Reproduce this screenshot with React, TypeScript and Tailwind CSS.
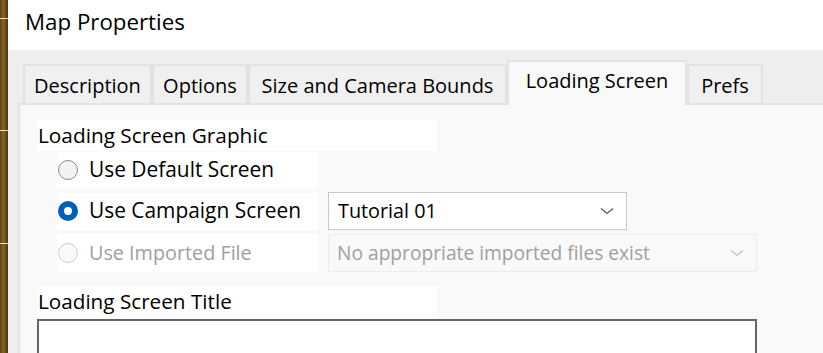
const font = "font-['Segoe_UI','Open_Sans','Noto_Sans',sans-serif]"

function Radio({ state }: { state: 'off' | 'on' | 'disabled' }) {
  if (state === 'on') {
    return (
      <span className="flex h-[20px] w-[20px] shrink-0 items-center justify-center rounded-full bg-[#005fb8]">
        <span className="h-[8px] w-[8px] rounded-full bg-white" />
      </span>
    )
  }
  return (
    <span
      className={
        state === 'off'
          ? 'h-[20px] w-[20px] shrink-0 rounded-full border border-[#8a8a8a] bg-[#f3f3f3]'
          : 'h-[20px] w-[20px] shrink-0 rounded-full border border-[#cfcfcf] bg-[#f9f9f9]'
      }
    />
  )
}

function Chevron({ color }: { color: string }) {
  return (
    <svg width="14" height="8" viewBox="0 0 14 8" fill="none">
      <path d="M1 1.5 L7 6.5 L13 1.5" stroke={color} strokeWidth="1.2" />
    </svg>
  )
}

const tabs = [
  { label: 'Description', w: 'w-[129px]' },
  { label: 'Options', w: 'w-[96px]' },
  { label: 'Size and Camera Bounds', w: 'w-[259px]' },
  { label: 'Loading Screen', w: 'w-[180px]' },
  { label: 'Prefs', w: 'w-[76px]' },
]

export default function App() {
  return (
    <div className={`flex h-[353px] w-[823px] overflow-hidden bg-[#eeeeee] text-black ${font}`}>
      {/* wood desktop edge behind the dialog */}
      <div className="flex w-[8px] shrink-0 flex-col bg-[linear-gradient(90deg,#5a3d17,#8a6428_40%,#6b4a1c_70%,#4a3210)]">
        <div className="mt-[18px] h-px w-full bg-[#e8dcc8]" />
        <div className="mt-[111px] h-px w-full bg-[#e8dcc8]" />
        <div className="mt-[112px] h-px w-full bg-[#e8dcc8]" />
      </div>
      <div className="flex min-w-0 flex-1 flex-col">
        <div className="flex h-[50px] shrink-0 items-center bg-white pl-[17px] pb-[6px] text-[22.3px]">
          Map Properties
        </div>

        <div className="flex h-[53px] shrink-0 items-end pl-[15px]">
          {tabs.map((t) => {
            const active = t.label === 'Loading Screen'
            return active ? (
              <div
                key={t.label}
                className={`relative z-10 -mb-[2px] flex h-[45px] ${t.w} items-center justify-center border-2 border-b-0 border-[#e3e3e3] bg-[#f9f9f9] pb-[6px] text-[20px] whitespace-nowrap`}
              >
                {t.label}
              </div>
            ) : (
              <div
                key={t.label}
                className={`flex h-[39px] ${t.w} items-center justify-center border-2 border-b-0 border-[#e3e3e3] bg-[#f0f0f0] pt-[2px] text-[20px] whitespace-nowrap`}
              >
                {t.label}
              </div>
            )
          })}
        </div>

        <div className="ml-[10px] flex-1 border-2 border-b-0 border-r-0 border-[#e3e3e3] bg-[#f9f9f9] pt-[15px] pl-[17px]">
          <div className="flex h-[31px] w-[400px] items-center bg-white pl-[1px] text-[20.8px]">
            Loading Screen Graphic
          </div>

          <div className="mt-[1px] flex flex-col gap-[4px] pl-[20px]">
            <div className="flex h-[36px] w-[261px] items-center gap-[11px] bg-white pl-[1px] text-[20.9px]">
              <Radio state="off" />
              Use Default Screen
            </div>

            <div className="flex items-center gap-[10px]">
              <div className="flex h-[37px] w-[261px] items-center gap-[11px] bg-white pl-[1px] text-[20.9px] whitespace-nowrap">
                <Radio state="on" />
                Use Campaign Screen
              </div>
              <div className="flex h-[38px] w-[299px] items-center justify-between border border-[#c8c8c8] bg-white pr-[12px] pl-[9px] text-[19.8px]">
                Tutorial 01
                <Chevron color="#555555" />
              </div>
            </div>

            <div className="flex items-center gap-[10px]">
              <div className="flex h-[38px] w-[261px] items-center gap-[11px] bg-white pl-[1px] text-[19.8px] text-[#a0a0a0]">
                <Radio state="disabled" />
                Use Imported File
              </div>
              <div className="flex h-[38px] w-[429px] items-center justify-between border border-[#ececec] bg-[#f9f9f9] pr-[12px] pl-[8px] text-[19.2px] text-[#a0a0a0] whitespace-nowrap">
                No appropriate imported files exist
                <Chevron color="#c0c0c0" />
              </div>
            </div>
          </div>

          <div className="mt-[14px] flex h-[32px] w-[400px] items-center bg-white pl-[1px] text-[20.7px]">
            Loading Screen Title
          </div>
          <div className="mt-[1px] h-[40px] w-[720px] border-2 border-[#646464] bg-white" />
        </div>
      </div>
    </div>
  )
}
